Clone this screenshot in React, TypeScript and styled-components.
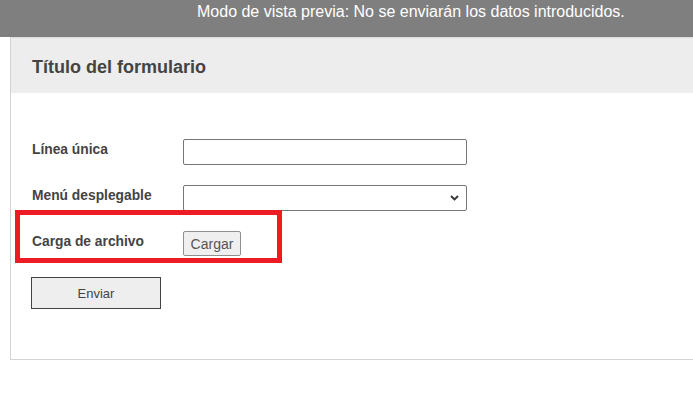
import * as React from 'react';
import styled, { createGlobalStyle } from 'styled-components';

const GlobalStyle = createGlobalStyle`
    html, body {
        margin: 0;
        padding: 0;
        background: #fff;
        overflow: hidden;
        font-family: "Liberation Sans", Arial, sans-serif;
    }
`;

const PreviewBar = styled.div`
    height: 37px;
    box-sizing: border-box;
    background: #7f7f7f;
    color: #fff;
    font-size: 16px;
    line-height: 24px;
    padding-left: 197px;
    white-space: nowrap;
`;

const FormCard = styled.div`
    margin-left: 10px;
    border-left: 1px solid #d3d3d3;
    border-bottom: 1px solid #d3d3d3;
    border-top: 1px solid #dcdcdc;
    box-sizing: border-box;
`;

const FormHeader = styled.div`
    height: 55px;
    box-sizing: border-box;
    background: #ededed;
    padding: 18px 0 0 21px;
`;

const FormTitle = styled.h1`
    margin: 0;
    font-size: 18px;
    line-height: 22px;
    font-weight: bold;
    color: #444;
`;

const FormBody = styled.div`
    display: flex;
    flex-direction: column;
    padding: 46px 0 50px 21px;
`;

const FieldList = styled.div`
    display: flex;
    flex-direction: column;
    gap: 20px;
`;

const FieldRow = styled.div`
    position: relative;
    display: grid;
    grid-template-columns: 151px auto;
    align-items: start;
`;

const FieldLabel = styled.label`
    font-size: 13.8px;
    font-weight: bold;
    line-height: 16px;
    color: #444;
    padding-top: 3px;
`;

const TextInput = styled.input`
    width: 284px;
    height: 26px;
    box-sizing: border-box;
    border: 1px solid #767676;
    border-radius: 2px;
    margin: 0;
    padding: 2px 4px;
`;

const SelectWrap = styled.div`
    position: relative;
    width: 284px;
    height: 26px;
`;

const SelectInput = styled.select`
    appearance: none;
    -webkit-appearance: none;
    display: block;
    width: 284px;
    height: 26px;
    box-sizing: border-box;
    border: 1px solid #767676;
    border-radius: 2px;
    background: #fff;
    margin: 0;
`;

const Chevron = styled.svg`
    position: absolute;
    right: 8px;
    top: 10px;
    width: 9px;
    height: 6px;
    pointer-events: none;
`;

const UploadButton = styled.button`
    width: 58px;
    height: 25px;
    box-sizing: border-box;
    margin: 0;
    padding: 0;
    border: 1px solid #8f8f8f;
    border-radius: 2px;
    background: #efefef;
    color: #555;
    font-family: "Liberation Sans", Arial, sans-serif;
    font-size: 14px;
`;

const Highlight = styled.div`
    position: absolute;
    left: -17px;
    top: -21px;
    width: 267px;
    height: 53px;
    box-sizing: border-box;
    border: 5px solid #ed1c24;
    pointer-events: none;
`;

const SubmitButton = styled.button`
    margin-top: 21px;
    margin-left: -1px;
    width: 130px;
    height: 32px;
    box-sizing: border-box;
    border: 1px solid #444;
    border-radius: 0;
    background: #eeeeee;
    color: #444;
    font-family: "Liberation Sans", Arial, sans-serif;
    font-size: 13px;
    padding: 0;
`;

export default function App() {
    return (
        <>
            <GlobalStyle />
            <PreviewBar>Modo de vista previa: No se enviarán los datos introducidos.</PreviewBar>
            <FormCard>
                <FormHeader>
                    <FormTitle>Título del formulario</FormTitle>
                </FormHeader>
                <FormBody>
                    <FieldList>
                        <FieldRow>
                            <FieldLabel>Línea única</FieldLabel>
                            <TextInput type="text" />
                        </FieldRow>
                        <FieldRow>
                            <FieldLabel>Menú desplegable</FieldLabel>
                            <SelectWrap>
                                <SelectInput defaultValue="">
                                    <option value=""></option>
                                </SelectInput>
                                <Chevron viewBox="0 0 9 6">
                                    <path d="M1 1 L4.5 4.5 L8 1" fill="none" stroke="#333" strokeWidth="1.8" />
                                </Chevron>
                            </SelectWrap>
                        </FieldRow>
                        <FieldRow>
                            <Highlight />
                            <FieldLabel>Carga de archivo</FieldLabel>
                            <div>
                                <UploadButton type="button">Cargar</UploadButton>
                            </div>
                        </FieldRow>
                    </FieldList>
                    <div>
                        <SubmitButton type="button">Enviar</SubmitButton>
                    </div>
                </FormBody>
            </FormCard>
        </>
    );
}
